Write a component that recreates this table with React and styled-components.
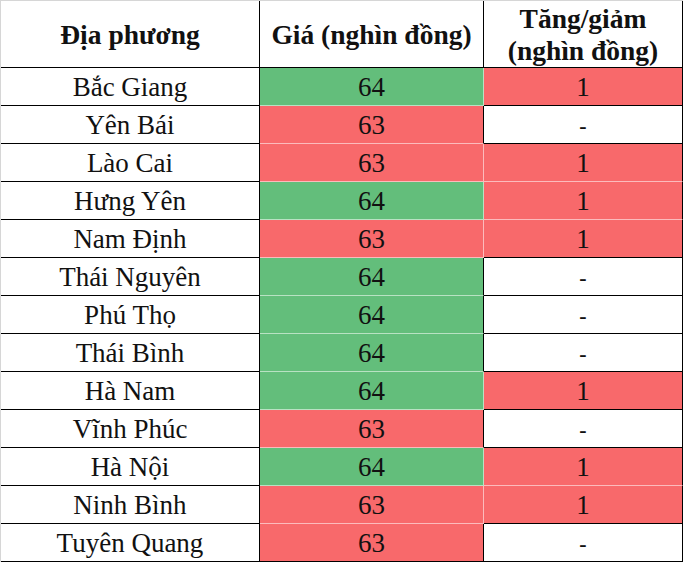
import styled, { createGlobalStyle } from 'styled-components'

const GlobalStyle = createGlobalStyle`
  body {
    margin: 0;
    background: #fff;
  }
`

const FILLS = {
  green: '#63be7b',
  red: '#f8696b',
}

const rows = [
  ['Bắc Giang', 64, 'green', '1', 'red'],
  ['Yên Bái', 63, 'red', '-', null],
  ['Lào Cai', 63, 'red', '1', 'red'],
  ['Hưng Yên', 64, 'green', '1', 'red'],
  ['Nam Định', 63, 'red', '1', 'red'],
  ['Thái Nguyên', 64, 'green', '-', null],
  ['Phú Thọ', 64, 'green', '-', null],
  ['Thái Bình', 64, 'green', '-', null],
  ['Hà Nam', 64, 'green', '1', 'red'],
  ['Vĩnh Phúc', 63, 'red', '-', null],
  ['Hà Nội', 64, 'green', '1', 'red'],
  ['Ninh Bình', 63, 'red', '1', 'red'],
  ['Tuyên Quang', 63, 'red', '-', null],
]

const Sheet = styled.div`
  display: grid;
  grid-template-columns: 259px 224px 199px;
  grid-template-rows: 67px repeat(13, 38px);
  width: max-content;
  border-top: 1px solid #d6d6d6;
  border-left: 1px solid #d6d6d6;
  font-family: 'Liberation Serif', 'DejaVu Serif', serif;
  color: #111;
`

const Cell = styled.div`
  display: flex;
  align-items: center;
  justify-content: center;
  text-align: center;
  padding-top: 2px;
  background: ${(p) => (p.$fill ? FILLS[p.$fill] : '#fff')};
  border-right: 1px solid ${(p) => (p.$softRight ? 'rgba(255,255,255,0.55)' : '#000')};
  border-bottom: 1px solid ${(p) => (p.$softBottom ? 'rgba(255,255,255,0.55)' : '#000')};
  font-size: 27px;
  line-height: 1;
`

const HeadCell = styled(Cell)`
  font-weight: bold;
  font-size: 27.5px;
  line-height: 32px;
`

const Dash = styled.span`
  font-weight: bold;
  font-size: 22px;
`

export default function App() {
  return (
    <>
      <GlobalStyle />
      <Sheet>
        <HeadCell>Địa phương</HeadCell>
        <HeadCell>Giá (nghìn đồng)</HeadCell>
        <HeadCell>
          Tăng/giảm
          <br />
          (nghìn đồng)
        </HeadCell>
        {rows.map(([name, price, priceFill, change, changeFill], i) => {
          const next = rows[i + 1]
          return [
            <Cell key={name + 'n'}>{name}</Cell>,
            <Cell
              key={name + 'p'}
              $fill={priceFill}
              $softRight={!!changeFill}
              $softBottom={!!next}
            >
              {price}
            </Cell>,
            <Cell
              key={name + 'c'}
              $fill={changeFill}
              $softBottom={!!changeFill && next && !!next[4]}
            >
              {change === '-' ? <Dash>-</Dash> : change}
            </Cell>,
          ]
        })}
      </Sheet>
    </>
  )
}
